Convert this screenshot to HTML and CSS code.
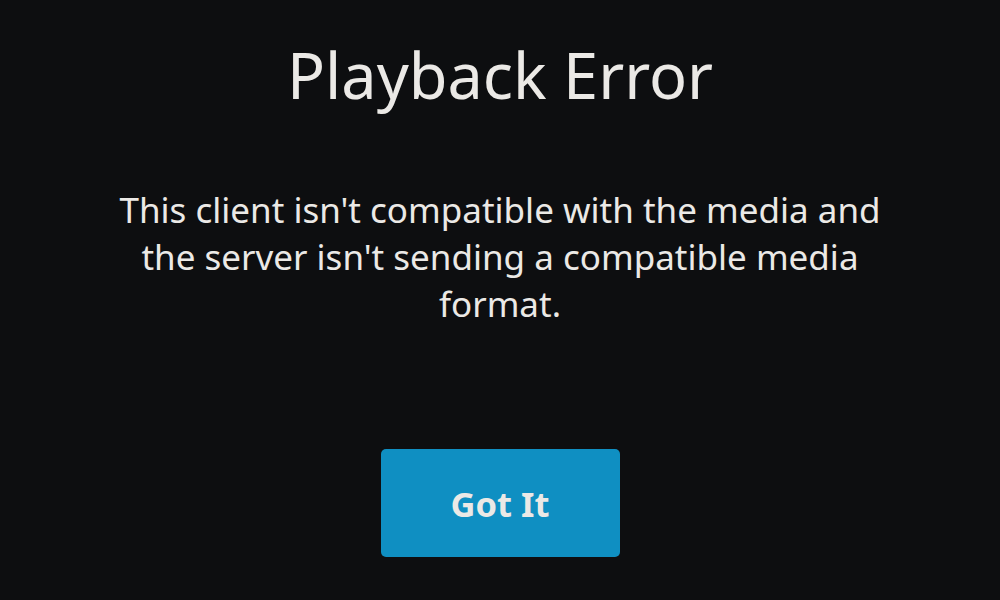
FILE: index.html
```html
<!DOCTYPE html>
<html lang="en">
<head>
    <meta charset="UTF-8">
    <meta name="viewport" content="width=device-width, initial-scale=1.0">
    <title>Playback Error</title>
    <link rel="stylesheet" href="styles.css">
</head>
<body>
    <div class="dialog">
        <h1 class="dialog-title">Playback Error</h1>
        <p class="dialog-text">This client isn't compatible with the media and the server isn't sending a compatible media format.</p>
        <button class="dialog-button" type="button">Got It</button>
    </div>
</body>
</html>
```

FILE: styles.css
```css
html, body {
    height: 100%;
}
body {
    margin: 0;
    background-color: #0d0e10;
    color: #ebe9e6;
    font-family: "Noto Sans", "Open Sans", sans-serif;
}
.dialog {
    display: flex;
    flex-direction: column;
    align-items: center;
    text-align: center;
    padding-top: 30px;
}
.dialog-title {
    margin: 0;
    font-size: 63px;
    font-weight: 400;
    line-height: 90px;
}
.dialog-text {
    width: 790px;
    margin: 66px 0 0;
    font-size: 35px;
    line-height: 47px;
}
.dialog-button {
    width: 239px;
    height: 108px;
    margin-top: 122px;
    border: none;
    border-radius: 5px;
    background-color: #0f8fc2;
    color: #ebe9e6;
    font-family: inherit;
    font-size: 34.5px;
    font-weight: 700;
    cursor: pointer;
}
```
